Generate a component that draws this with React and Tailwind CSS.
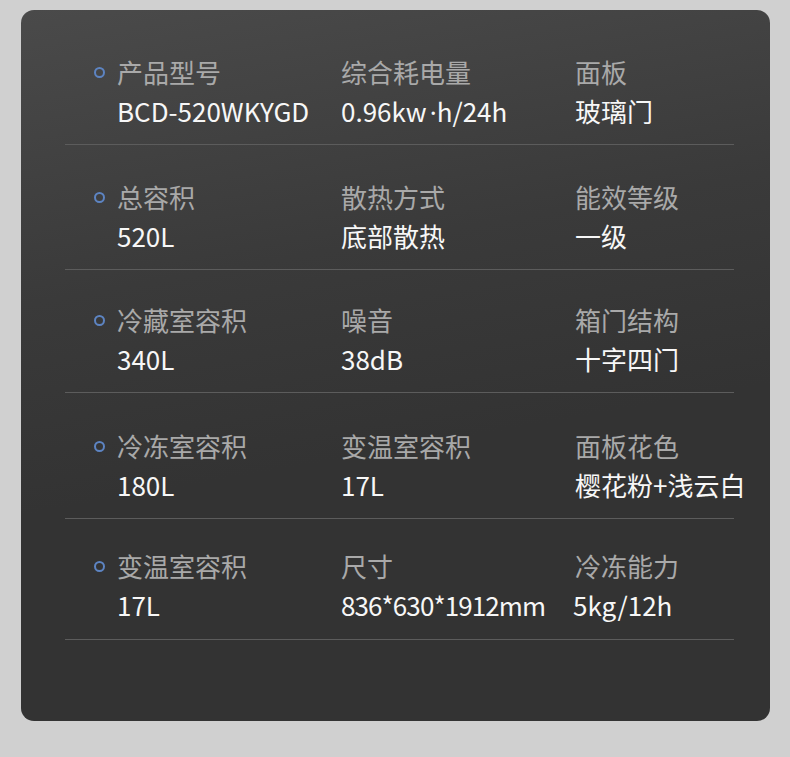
import React from 'react';

const ROWS = [
    {
        pad: 'pt-[44px] pb-[14px]',
        dot: 'top-[57px]',
        items: [
            ['产品型号', 'BCD-520WKYGD'],
            ['综合耗电量', 'dot'],
            ['面板', '玻璃门'],
        ],
    },
    {
        pad: 'pt-[34px] pb-[15px]',
        dot: 'top-[47px]',
        items: [
            ['总容积', '520L'],
            ['散热方式', '底部散热'],
            ['能效等级', '一级'],
        ],
    },
    {
        pad: 'pt-[32px] pb-[15px]',
        dot: 'top-[45px]',
        items: [
            ['冷藏室容积', '340L'],
            ['噪音', '38dB'],
            ['箱门结构', '十字四门'],
        ],
    },
    {
        pad: 'pt-[35px] pb-[15px]',
        dot: 'top-[48px]',
        items: [
            ['冷冻室容积', '180L'],
            ['变温室容积', '17L'],
            ['面板花色', '樱花粉+浅云白'],
        ],
    },
    {
        pad: 'pt-[29px] pb-[16px]',
        dot: 'top-[42px]',
        items: [
            ['变温室容积', '17L'],
            ['尺寸', '836*630*1912mm'],
            ['冷冻能力', '5kg/12h'],
        ],
    },
];

function Value({ value }) {
    if (value === 'dot') {
        return (
            <>
                0.96kw<span className="ml-[3px]" style={{ fontFamily: '"Noto Sans", sans-serif' }}>·</span>h/24h
            </>
        );
    }
    if (value === '836*630*1912mm') {
        return <span className="tracking-[-0.9px]">{value}</span>;
    }
    if (value === '5kg/12h') {
        return <span className="-ml-[2px]">{value}</span>;
    }
    return value;
}

function SpecRow({ row }) {
    return (
        <div className={`relative grid grid-cols-[276px_234px_1fr] border-b border-[#5c5c5c] ${row.pad}`}>
            <span className={`absolute left-[29px] ${row.dot} w-[11px] h-[11px] rounded-full border-2 border-[#5d84c2]`} />
            {row.items.map(([label, value], i) => (
                <div key={i} className={i === 0 ? 'pl-[52px]' : ''}>
                    <div className="text-[26px] leading-[36px] text-[#a9a9a9]">{label}</div>
                    <div className="mt-[3px] text-[26px] leading-[36px] text-[#f7f7f7] whitespace-nowrap">
                        <Value value={value} />
                    </div>
                </div>
            ))}
        </div>
    );
}

export default function App() {
    return (
        <div className="w-[790px] h-[757px] bg-[#d0d0d0] pt-[10px] pl-[21px]" style={{ fontFamily: '"Noto Sans CJK SC", "Noto Sans", sans-serif' }}>
            <div className="w-[749px] h-[711px] rounded-[13px] bg-[linear-gradient(170deg,#4a4a4a_0%,#3a3a3a_35%,#333333_60%,#333333_100%)] pl-[44px] pr-[36px]">
                {ROWS.map((row, i) => (
                    <SpecRow key={i} row={row} />
                ))}
            </div>
        </div>
    );
}
